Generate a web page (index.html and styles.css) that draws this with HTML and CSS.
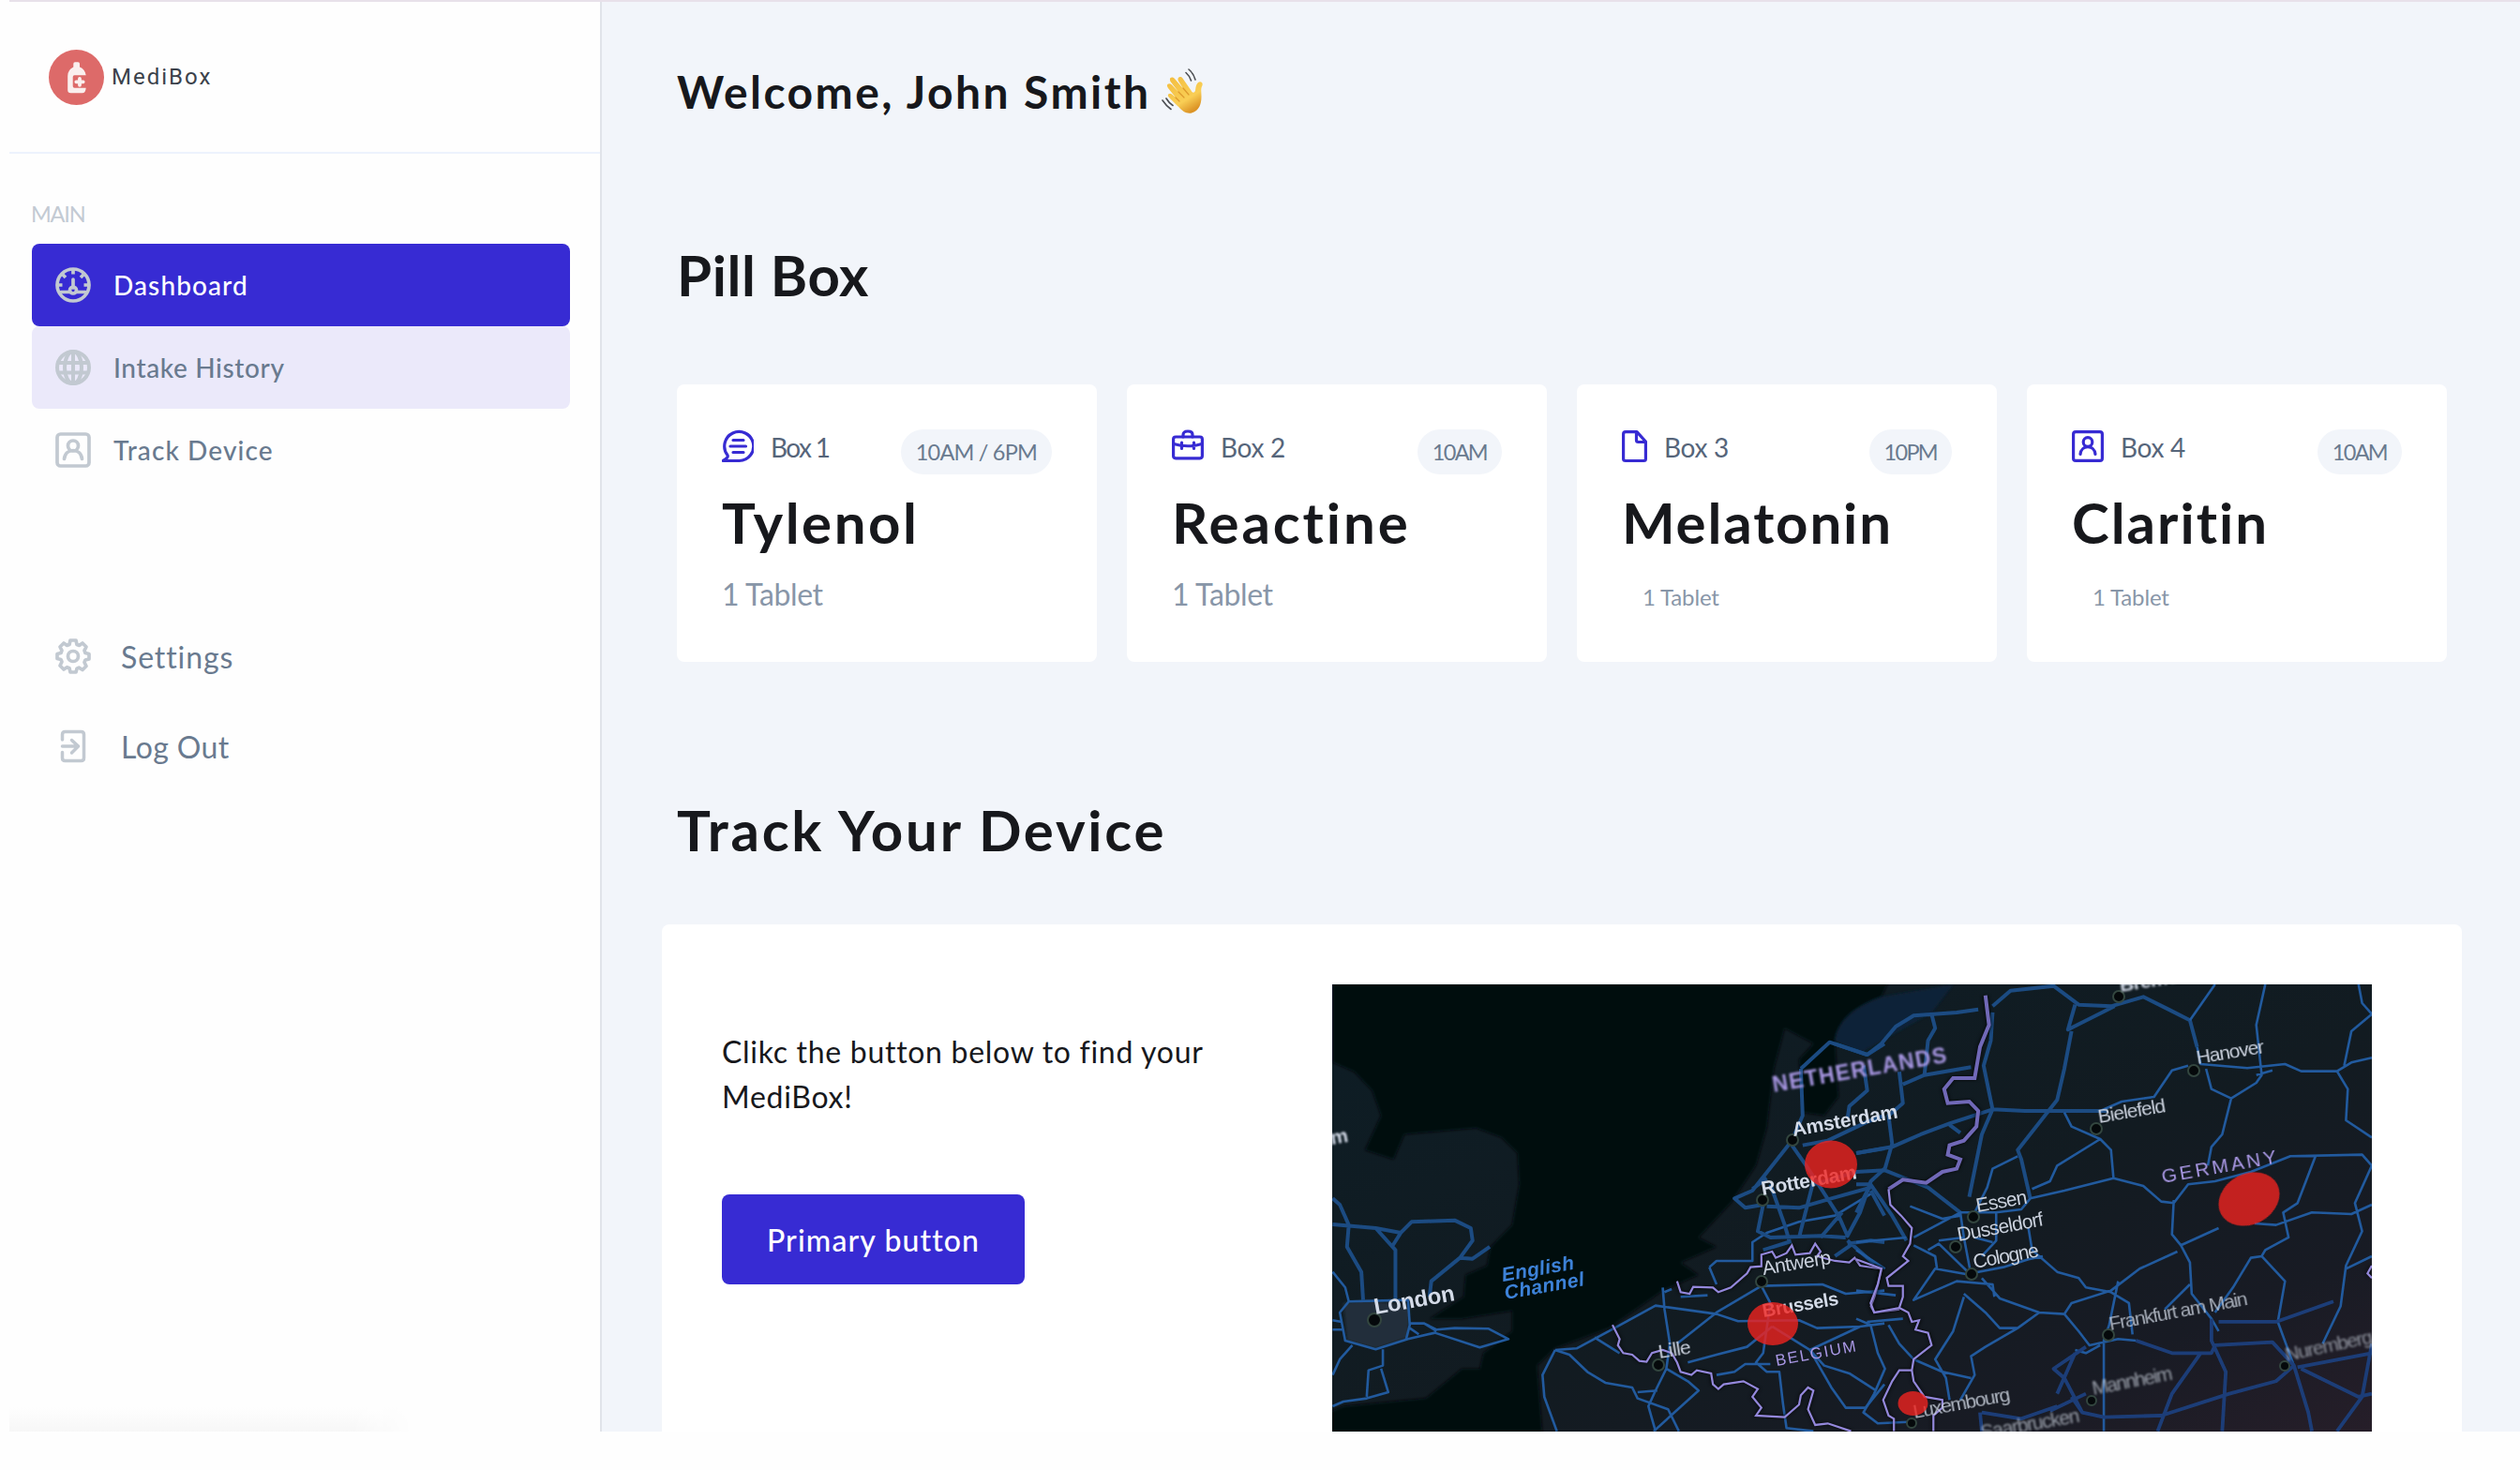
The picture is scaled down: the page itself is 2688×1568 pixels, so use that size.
FILE: index.html
```html
<!DOCTYPE html>
<html lang="en">
<head>
<meta charset="utf-8">
<title>MediBox</title>
<link rel="stylesheet" href="styles.css">
</head>
<body>
<div class="app">
  <aside class="sidebar">
    <div class="brand">
      <svg class="brand-mark" viewBox="0 0 59 59"><circle cx="29.500" cy="29.500" r="29.500" fill="#dd6a69"/><path d="M26.300 15q0-1.700 1.700-1.700h3.300q1.700 0 1.700 1.700v3.500q5.500 2 6.700 8.800H27.400q-1.700 0-1.700 1.700v10q0 1.700 1.700 1.700h12.300q-.4 5.600-4 5.600H23.500q-3.300 0-3.300-3.300V28q0-6.500 6.100-9.500z" fill="#faefee"/><path d="M33 31v6.800M29.300 34.300h7.400" stroke="#faefee" stroke-width="3.800" stroke-linecap="round"/></svg>
      <span class="brand-name">MediBox</span>
    </div>
    <p class="nav-label">MAIN</p>
    <nav class="nav">
      <a class="nav-item active">
        <svg viewBox="0 0 38 38"><g fill="none" stroke="#c2c9d1" stroke-width="3.700" stroke-linecap="round"><circle cx="19" cy="19" r="17"/><path d="M6 26.500h9.500M22.500 26.500H32M19 13v9"/><circle cx="19" cy="24.500" r="3.500"/><path d="M19 3v4.500M3 19h4.500M30.500 19H35M8 8l3 3M30 8l-3 3" stroke-linecap="butt"/></g></svg>
        <span>Dashboard</span>
      </a>
      <a class="nav-item hover">
        <svg viewBox="0 0 38 38"><g fill="none" stroke="#c2c9d1" stroke-width="4"><circle cx="19" cy="19" r="17"/><ellipse cx="19" cy="19" rx="9" ry="17"/><path d="M19 2v34M3 14h32M3 24.500h32"/></g></svg>
        <span class="history">Intake History</span>
      </a>
      <a class="nav-item">
        <svg viewBox="0 0 38 38"><g fill="none" stroke="#c2c9d1" stroke-width="3.700" stroke-linecap="round"><rect x="2" y="2" width="34" height="34" rx="3.500"/><circle cx="19" cy="14.500" r="5.500"/><path d="M9.500 28.500C11 16.500 27 16.500 28.500 28.500"/></g></svg>
        <span>Track Device</span>
      </a>
    </nav>
    <nav class="nav-secondary">
      <a class="nav-link">
        <svg viewBox="0 0 38 38"><g fill="none" stroke="#c2c9d1" stroke-width="3.700" stroke-linejoin="round"><path d="M16 2h6l1 4.500 2.500 1L29 5l4 4-2 3.800 1 2.700 4 1v5.500l-4 1-1 2.500 2 4-4 4-3.800-2.300-2.200 1L22 36h-6l-1-4.300-2.500-1L9 33l-4-4 2-4-1-2.500-4-1V16.500l4-1 1-2.700L5 9l4-4 3.500 2.500 2.500-1z"/><circle cx="19" cy="19" r="5.500"/></g></svg>
        <span>Settings</span>
      </a>
      <a class="nav-link">
        <svg viewBox="0 0 38 38"><g fill="none" stroke="#c2c9d1" stroke-width="3.500" stroke-linecap="round" stroke-linejoin="round"><path d="M7.500 12V6.500q0-3 3-3h17q3 0 3 3v25q0 3-3 3h-17q-3 0-3-3V25.500M7.500 19h17M17.500 12.500l7 6.500-7 7"/></g></svg>
        <span class="logout">Log Out</span>
      </a>
    </nav>
    <div class="status-shadow"></div>
  </aside>

  <main class="main">
    <h1 class="welcome"><span>Welcome, John Smith</span>
      <svg class="wave" viewBox="0 0 48 48">
        <defs><linearGradient id="skin" x1="0" y1="0" x2=".6" y2="1"><stop offset="0" stop-color="#f3bd3f"/><stop offset=".7" stop-color="#f9ce55"/><stop offset="1" stop-color="#dc9426"/></linearGradient></defs>
        <path d="M18 41L8 31c-3-3 .5-5.500 3-3.500l4 3.500-8-10c-3-4 1-6.500 4-3.500l7 7.500-8.500-11c-2-4 1.500-6 4.500-3l9 10.500-5-8c-2-4 2-6 4.500-3l9 13c1.500 3 3.500 3 4.500 0 .5-3 .5-6 2.500-8 2.500-2.500 6-1 5 2.500-2 4-1 7-1 12 0 9-3 14-8 16.500-5 2.500-11 1.500-17-6.500z" fill="url(#skin)"/>
        <path d="M15 31l4 4M18 25l6 6M23 21l6 7" fill="none" stroke="#dd9a2d" stroke-width="1.200" stroke-linecap="round"/>
        <path d="M29 1q5 4 7 11M26 4.500q4 3.500 5.500 8.500M1 34q4 6 9 9.500M5 32q3 5 7 7.500" fill="none" stroke="#4c4e52" stroke-width="1.600" stroke-linecap="round"/>
      </svg>
    </h1>
    <h2 class="section-title pill-title">Pill Box</h2>
    <section class="cards">
      <article class="card">
        <div class="card-head">
          <svg width="34" height="36" viewBox="0 0 34 36"><g fill="none" stroke="#372bd3" stroke-width="3.200" stroke-linecap="round" stroke-linejoin="round"><path d="M17 33.500A15.500 15.500 0 1 0 4.500 27.500Q6 30-.2 33.500z" transform="translate(1.500)"/><path d="M12 11.500h11M9 18h16.500M12 24.500h11"/></g></svg>
          <span class="box one">Box 1</span>
          <span class="time long">10AM / 6PM</span>
        </div>
        <h3 class="tylenol">Tylenol</h3>
        <p class="dose">1 Tablet</p>
      </article>
      <article class="card">
        <div class="card-head">
          <svg width="34" height="36" viewBox="0 0 34 36"><g fill="none" stroke="#372bd3" stroke-width="3.200" stroke-linecap="round" stroke-linejoin="round"><rect x="1.600" y="8" width="30.800" height="22.800" rx="2.500"/><path d="M12 8V6q0-4 5-4t5 4v2M2 15.500q15 4.500 30 0M10.500 14v6.500M23.500 14v6.500"/></g></svg>
          <span class="box">Box 2</span>
          <span class="time">10AM</span>
        </div>
        <h3 class="reactine">Reactine</h3>
        <p class="dose">1 Tablet</p>
      </article>
      <article class="card">
        <div class="card-head">
          <svg width="27" height="36" viewBox="0 0 27 36"><g fill="none" stroke="#372bd3" stroke-width="3.200" stroke-linejoin="round"><path d="M4 2.600h12l9.400 10.400v18.500q0 2-2 2H4q-2.400 0-2.400-2V5q0-2.400 2.400-2.400zM15.500 3v8.500q0 2 2 2h8"/></g></svg>
          <span class="box">Box 3</span>
          <span class="time">10PM</span>
        </div>
        <h3 class="melatonin">Melatonin</h3>
        <p class="dose small">1 Tablet</p>
      </article>
      <article class="card">
        <div class="card-head">
          <svg width="34" height="36" viewBox="0 0 34 36"><g fill="none" stroke="#372bd3" stroke-width="3.200" stroke-linecap="round"><rect x="1.600" y="2.600" width="30.800" height="30.800" rx="2.500"/><circle cx="17" cy="13.500" r="4.800"/><path d="M9 26.500C10 16 24 16 25 26.500"/></g></svg>
          <span class="box">Box 4</span>
          <span class="time">10AM</span>
        </div>
        <h3 class="claritin">Claritin</h3>
        <p class="dose small">1 Tablet</p>
      </article>
    </section>
    <h2 class="section-title track-title">Track Your Device</h2>
    <section class="tracker">
      <div class="tracker-copy">
        <p>Clikc the button below to find your MediBox!</p>
        <button class="primary">Primary button</button>
      </div>
      <svg class="map" viewBox="0 0 1109 477">
        <defs>
          <linearGradient id="ground" x1="0" y1="0" x2="1" y2="1"><stop offset="0" stop-color="#0d1d25"/><stop offset=".55" stop-color="#121b21"/><stop offset=".8" stop-color="#181b24"/><stop offset="1" stop-color="#261e29"/></linearGradient>
          <filter id="soft"><feGaussianBlur stdDeviation=".6"/></filter>
          <filter id="softer" x="-10%" y="-50%" width="120%" height="200%"><feGaussianBlur stdDeviation="1.200"/></filter>
          <filter id="haze"><feGaussianBlur stdDeviation="4"/></filter>
        </defs>
        <rect width="1109" height="477" fill="url(#ground)"/>
        <!-- North Sea and Channel -->
        <g transform="translate(-11 -20) scale(.3827 .3333)">
          <path filter="url(#haze)" fill="#050a11" d="M0 0H1600L1560 100Q1440 150 1430 240L1440 420 1400 480 1340 470 1330 300 1370 250 1290 200 1260 330 1240 520 1210 640 1140 760 1050 870 1100 900 1000 950 1050 990 950 1040 800 1160 650 1225 600 1280 615 1500H0V1440L60 1410 290 1385 390 1290 440 1290 450 1240 530 1170 530 1105 390 1130 300 1130 395 1060 400 990 460 960 470 900 530 830 550 700 545 600 500 550 430 520 230 540 200 620 120 590 165 480 140 400 90 340 30 310V0z"/>
          <path d="M60 1080L130 1070 245 1090 240 1190 150 1225 70 1200z" fill="#232f3b" filter="url(#haze)"/>
          <path d="M1560 100Q1440 150 1430 240L1500 280 1700 150 1760 60z" fill="#0b2038" filter="url(#haze)"/>
        </g>
        <!-- roads, western half -->
        <g class="roads west" filter="url(#soft)" transform="translate(-11 -20) scale(.3827 .3333)">
          <path class="wide" d="M30 745L50 765 75 830 70 900 110 980 115 1070M30 828L150 840 220 855 250 820 370 815 415 840 420 880 385 935 305 1010 300 1060M150 840L205 910 205 1065M220 855L195 900M385 935L420 938 468 900"/>
          <path d="M30 980L65 1030 75 1075 50 1110 65 1200 150 1228 240 1195 315 1175 440 1222 520 1195 465 1162 370 1160 320 1165 285 1145 245 1145M75 1075L240 1070 245 1150 235 1195M30 1135L55 1140M30 1165H60M85 1215L50 1260 30 1310M170 1228V1280L130 1295 125 1380M165 1290L185 1365 125 1385 60 1395 30 1410M245 1160L270 1180M285 1145L320 1170"/>
          <path d="M950 1030L955 1100 970 1210 960 1290 930 1360 910 1410 930 1490M800 1170L930 1088 1100 1115 1160 1138 1330 1135 1380 1160 1500 1155 1568 1145M760 1190L830 1240M650 1230L710 1225 800 1170M650 1230L615 1310 620 1380 655 1490M650 1230L690 1245 740 1300 790 1335 865 1350 880 1385 965 1420 995 1490M880 1365L935 1360M925 1490L1050 1360 1020 1330 960 1290M990 1210L1100 1110 1225 1025 1395 1020 1460 1050 1568 1040M955 1045L975 1035M1000 1060L1075 1055M1225 1025L1250 1080 1230 1240 1210 1270 1240 1300 1275 1300 1285 1400 1295 1480 1370 1490M1020 1270L1100 1245 1185 1220 1255 1155M1100 1310L1150 1300 1180 1275 1250 1275M1255 1155L1360 1230 1420 1350 1460 1415 1515 1415 1568 1340M1360 1230L1400 1280 1470 1305 1545 1360M1360 1230L1500 1155M1080 965L1100 1020M1080 965L1100 945 1200 945 1200 885 1240 855 1330 820 1430 800 1530 730"/>
          <path class="wide" d="M1335 330L1415 245 1520 285 1568 250M1335 330L1340 480 1310 560 1200 720 1150 745 1180 775 1230 765 1215 850 1250 870 1390 865 1460 870M1310 575L1350 640 1440 800 1465 865 1500 790 1530 690 1568 650M1340 575L1410 560 1520 500 1568 480M1510 320L1520 400 1470 450 1465 490M1240 770L1330 775 1420 745 1530 710M1250 700L1290 830 1305 890M1240 680L1200 715M1370 690L1330 870M1390 870L1450 790M1530 720L1568 800M1230 910L1300 885M1465 890L1530 880 1568 885M1465 880L1540 955M1480 890L1430 930M1490 600L1568 585M1370 700L1490 660"/>
        </g>
        <!-- roads, eastern half -->
        <g class="roads" filter="url(#soft)" transform="translate(559 -20) scale(.3827 .3333)">
          <path class="wide" d="M-60 250L30 285 70 250 110 195 160 160 280 150 340 140M210 155L220 200 200 240 190 350M130 380L190 350 320 325M120 340L130 440 90 480 100 570 80 650M0 600L100 580 180 540 260 505 380 460 470 465 700 465M380 130L430 80 550 65 620 125 710 130 800 100 870 140 930 175 950 260M610 125L590 205 720 130M600 210L580 330 560 430 450 590 460 620 485 745M380 150L375 240 355 320 380 460 350 540 315 740M260 510L290 535M0 660L80 655 200 710 290 790M0 700H40L100 800 140 880M40 700L0 790"/>
          <path d="M930 175L1000 60M950 260L960 315 1090 328 1195 315 1240 338 1340 338 1380 310 1437 295M1140 60L1115 190 1130 350 1115 375 1045 425 990 395 975 330M1045 425L1020 540 990 580 980 640M1400 60L1410 120 1437 155 1380 210 1360 320M1340 338L1370 395 1365 495 1437 550M1115 350L1160 335M925 320L880 335 830 420 740 435 680 465M580 470L600 515 680 555 710 590 717 680 800 705 850 755 885 760 925 700 1000 690 1100 660 1210 610 1410 605 1437 640M680 555L560 640 540 690 490 715M485 745L580 720 717 680M450 610L380 650 365 710 330 790M885 750L880 860 905 895 1010 840M905 895L930 950 935 1050 990 1130 1010 1170M1110 825L1170 830 1270 790 1380 795 1437 765M1280 610L1230 760 1190 790 1205 870 1140 910 1130 930 1195 1010 1175 1140 1220 1280M1130 930L1100 935 1050 1030 1000 1110M1437 640L1390 760 1410 850 1365 960 1350 1090 1300 1210M895 915L790 970 710 1040 600 1080 580 1115M1437 930L1365 970M480 840L490 910 560 980 620 1000 640 1030 710 1045 760 1080 770 1180M930 1020L860 1100M730 1010L705 1150 690 1200 690 1490M580 1115L510 1110 450 1160 360 1220 320 1250 330 1310 290 1390M580 1115L620 1170 650 1215 730 1195 780 1200M610 1230L640 1240 680 1215M350 1000L400 1065 510 1110M320 990L220 970 160 1070 280 1010 380 1020 385 1060M300 1060L270 1170 220 1260 250 1320 260 1390M300 1050L360 1110 400 1160 450 1160M320 990L230 890 200 910M300 870L230 880M320 990L300 870 290 790 160 870M290 790L390 790 460 780 485 745M390 790V880L350 930M330 870L380 885M320 985L410 965 480 940 520 930M290 800L240 810 150 770M160 895L220 930 225 970M0 885L140 870M0 910L80 970M0 1040L110 1055M0 1130L40 1150 60 1240 80 1290 50 1370 20 1430 60 1465 150 1460M30 1140L130 1130M90 1150L120 1210 160 1260 240 1300 320 1320"/>
          <path class="deep" d="M780 1200L880 1240 990 1240 1000 1215 1160 1205 1220 1280 1260 1430 1270 1490M1010 1140L1170 1140 1330 1075M990 1130L990 1200 1030 1300 1020 1490M1230 1285L1437 1240M1220 1280L1170 1330 1040 1370 850 1440 690 1445 630 1430 600 1380M960 1240L880 1370 840 1490M1240 1290L1400 1380 1437 1370M1437 1210L1410 1380 1340 1490M540 1425L640 1370M640 1220L550 1290 580 1320 630 1430M350 1430L460 1450 560 1410M345 1430L350 1490M610 1240L560 1370"/>
        </g>
        <!-- borders -->
        <g class="borders" transform="translate(-11 -20) scale(.3827 .3333)">
          <path d="M990 1010L1000 1045 1025 1050 1035 1028 1090 1030 1105 1045 1140 1030 1185 985 1195 965 1225 962 1225 925 1255 915 1265 935 1295 920 1310 895 1320 925 1360 920 1375 890 1390 915 1380 930 1430 945 1470 950 1485 935 1500 960 1560 970 1550 1020 1540 1060 1530 1090 1540 1110 1610 1100M810 1150L830 1195 825 1215 840 1240 865 1245 885 1265 905 1268 920 1240 950 1230 975 1240 990 1270 1000 1300 1030 1310 1045 1295 1085 1305 1090 1340 1105 1355 1120 1340 1175 1330 1215 1355 1200 1380 1225 1415 1210 1440 1290 1445 1330 1405 1335 1375 1355 1350 1370 1360 1355 1420 1375 1470 1410 1465 1475 1490"/>
        </g>
        <g class="borders" transform="translate(559 -20) scale(.3827 .3333)">
          <path class="thick" d="M360 95L370 190 345 260 330 360 270 360 245 395 255 440 315 435 340 465 335 515 300 560 260 575 255 605 290 620 280 650 240 660 195 695 130 685 90 715"/>
          <path d="M90 715L95 765 125 800 155 840 150 890 130 930 145 945 85 1000 90 1025 130 1025 130 1060 120 1095 50 1110 40 1080 60 1020 70 970 0 940M120 1095L145 1110 155 1140 175 1135 165 1165 200 1175 210 1215 160 1260 155 1295 120 1295 100 1330 75 1390 90 1440 105 1450 105 1490M155 1295L160 1330 190 1380 240 1390 240 1415 215 1440 215 1490M1437 960L1425 985 1437 1000"/>
        </g>
        <g fill="#05090b" stroke="#33463f" stroke-width="2"><circle cx="45" cy="358" r="7"/><circle cx="491" cy="166" r="6"/><circle cx="459" cy="230" r="6"/><circle cx="458" cy="317" r="6"/><circle cx="348" cy="406" r="6"/><circle cx="684" cy="248" r="6"/><circle cx="665" cy="280" r="6"/><circle cx="682" cy="309" r="6"/><circle cx="919" cy="92" r="6"/><circle cx="815" cy="154" r="6"/><circle cx="839" cy="13" r="6"/><circle cx="828" cy="374" r="6"/><circle cx="810" cy="444" r="5"/><circle cx="1016" cy="407" r="5"/><circle cx="618" cy="468" r="5"/></g>
        <g class="places">
          <g filter="url(#softer)">
            <text class="b" transform="translate(-12 173) rotate(-10)">am</text>
            <text class="b country" font-size="23" transform="translate(471 115) rotate(-9.800)" textLength="188">NETHERLANDS</text>
            <text transform="translate(1018 402) rotate(-12)" textLength="95" opacity=".65">Nuremberg</text>
            <text transform="translate(812 438) rotate(-11)" textLength="87" opacity=".7">Mannheim</text>
            <text transform="translate(693 485) rotate(-10)" textLength="107" opacity=".7">Saarbrucken</text>
            <text class="b" transform="translate(841 8) rotate(-9)" textLength="75">Bremen</text>
          </g>
          <g filter="url(#soft)">
            <text class="b" transform="translate(492 162) rotate(-10)" textLength="114">Amsterdam</text>
            <text class="b" transform="translate(459 225) rotate(-10)" textLength="103">Rotterdam</text>
            <text class="b" font-size="24" transform="translate(46 352) rotate(-10)" textLength="87">London</text>
            <text class="sea" transform="translate(182 317) rotate(-10)" textLength="78">English</text>
            <text class="sea" transform="translate(185 336) rotate(-10)" textLength="86">Channel</text>
            <text transform="translate(830 369) rotate(-10.500)" textLength="150" opacity=".8">Frankfurt am Main</text>
            <text transform="translate(621 463) rotate(-10.500)" textLength="105" opacity=".85">Luxembourg</text>
          </g>
          <text transform="translate(460 310) rotate(-9.500)" textLength="74">Antwerp</text>
          <text class="b" font-size="20" transform="translate(460 355) rotate(-9.500)" textLength="82">Brussels</text>
          <text class="country" font-size="17" transform="translate(474 407) rotate(-10.500)" textLength="87">BELGIUM</text>
          <text transform="translate(349 399) rotate(-9)" textLength="35">Lille</text>
          <text transform="translate(688 243) rotate(-10)" textLength="55">Essen</text>
          <text transform="translate(668 274) rotate(-10.500)" textLength="93">Dusseldorf</text>
          <text transform="translate(685 303) rotate(-10.500)" textLength="71">Cologne</text>
          <text transform="translate(923 85) rotate(-9.500)" textLength="73">Hanover</text>
          <text transform="translate(818 148) rotate(-9.500)" textLength="73">Bielefeld</text>
          <text class="country" font-size="21" transform="translate(886 212) rotate(-10)" textLength="124">GERMANY</text>
        </g>
        <g fill="#ef2420" opacity=".8"><ellipse cx="532" cy="192" rx="28" ry="25.500"/><ellipse cx="470" cy="362" rx="27" ry="23"/><ellipse cx="978" cy="229" rx="34" ry="27" transform="rotate(-28 978 229)"/><ellipse cx="619.500" cy="447" rx="16" ry="13"/></g>
      </svg>
    </section>
  </main>
</div>
</body>
</html>
```
FILE: styles.css
```css
* { box-sizing: border-box; }
body { margin: 0; background: #fefefe; color: #17181c; font-family: Lato, "Liberation Sans", sans-serif; }
h1, h2, h3, p { margin: 0; }
.app { display: flex; height: 1527px; margin-left: 10px; overflow: hidden; border-top: 2px solid #e8e1ea; }
.sidebar { position: relative; flex: none; width: 632px; border-right: 2px solid #e0e3e9; background: #fefefe; }
.brand { display: flex; align-items: center; gap: 8px; height: 162px; padding: 0 0 0 42px; border-bottom: 2px solid #edf2fd; }
.brand-mark { width: 59px; height: 59px; }
.brand-name { color: #3b424b; font: 24px Roboto, sans-serif; letter-spacing: 2px; }
.nav-label { margin: 48px 0 16px 23px; color: #c3cad3; font-size: 23.5px; line-height: 32px; letter-spacing: -1.2px; }
.nav { margin: 0 32px 0 24px; }
.nav-item { display: flex; align-items: center; gap: 24px; height: 88px; padding-left: 25px; border-radius: 8px; color: #697a8f; font-size: 28px; font-weight: 500; letter-spacing: 1.1px; }
.nav-item svg, .nav-link svg { flex: none; width: 38px; height: 38px; }
.nav-item.active { background: #372bd3; color: #fff; }
.nav-item.hover { background: #ebe9fa; }
.history { letter-spacing: .63px; }
.nav-secondary { margin: 128px 0 0 49px; }
.nav-link { display: flex; align-items: center; gap: 32px; height: 96px; color: #697a8f; font-size: 32px; letter-spacing: .9px; }
.logout { letter-spacing: .4px; }
.status-shadow { position: absolute; left: 0; bottom: 0; width: 430px; height: 26px; background: linear-gradient(#fefefe, #f7f7f7); -webkit-mask-image: linear-gradient(90deg, #000 85%, transparent); }
.main { flex: 1; padding: 63px 62px 0 80px; background: #f2f5fa; }
.welcome { display: flex; align-items: center; gap: 12px; height: 64px; font-size: 48px; letter-spacing: 2.44px; }
.wave { width: 48px; height: 48px; }
.section-title { font-size: 60px; line-height: 72px; }
.pill-title { margin: 128px 0 81px; letter-spacing: .6px; }
.track-title { margin: 143px 0 65px; letter-spacing: 2.75px; }
.cards { display: grid; grid-template-columns: repeat(4, 448px); gap: 32px; }
.card { height: 296px; padding: 48px; border-radius: 8px; background: #fff; }
.card-head { display: flex; align-items: flex-start; height: 48px; }
.box { margin-left: 18px; color: #56657a; font-size: 28px; line-height: 38px; letter-spacing: -.3px; }
.box.one { letter-spacing: -1.6px; }
.time { margin-left: auto; padding: 0 16px; border-radius: 24px; background: #f2f5fa; color: #697a8f; font-size: 23.5px; line-height: 48px; letter-spacing: -1.7px; }
.time.long { letter-spacing: -.8px; }
.card h3 { margin-top: 15px; font-size: 60px; line-height: 72px; }
.tylenol { letter-spacing: 2.54px; }
.reactine { letter-spacing: 2.9px; }
.melatonin { letter-spacing: 1.85px; }
.claritin { letter-spacing: 2px; }
.dose { margin-top: 21px; color: #8896a8; font-size: 32px; line-height: 40px; letter-spacing: -.38px; }
.dose.small { margin: 24px 0 0 22px; font-size: 24px; letter-spacing: -.15px; }
.tracker { display: flex; width: 1920px; height: 700px; margin-left: -16px; padding: 64px 0 0 64px; border-radius: 8px; background: #fff; }
.tracker-copy { width: 651px; padding-top: 48px; }
.tracker-copy p { width: 560px; font-size: 32px; line-height: 48px; letter-spacing: .7px; }
.primary { width: 323px; height: 96px; margin-top: 80px; padding: 0; border: 0; border-radius: 8px; background: #372bd3; color: #fff; font: 500 32px Lato, sans-serif; letter-spacing: 1.1px; }
.map { flex: none; width: 1109px; height: 477px; }
.roads path { fill: none; stroke: #205a9e; stroke-width: 2.6px; stroke-linejoin: round; vector-effect: non-scaling-stroke; }
.roads .wide { stroke: #1a4b82; stroke-width: 4px; }
.roads .deep { stroke: #1c3e78; stroke-width: 3.8px; }
.borders path { fill: none; stroke: #9488dc; stroke-width: 2.2px; vector-effect: non-scaling-stroke; filter: drop-shadow(0 0 5px #000); }
.borders .thick { stroke: #7169b8; stroke-width: 4px; }
.places text { fill: #c9d0dc; font-family: "Liberation Sans", Arial, sans-serif; }
.places { font-size: 21px; }
.places .b { font-weight: 700; fill: #d4dbe8; }
.places .country { fill: #a796e2; }
.places .sea { fill: #3d82d8; font-weight: 700; font-style: italic; }
```
